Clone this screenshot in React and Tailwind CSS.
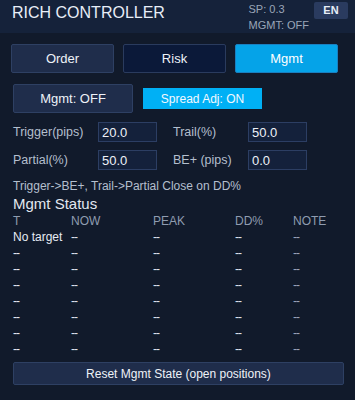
import React from 'react'

const rows = [
  ['No target', '--', '--', '--', '--'],
  ['--', '--', '--', '--', '--'],
  ['--', '--', '--', '--', '--'],
  ['--', '--', '--', '--', '--'],
  ['--', '--', '--', '--', '--'],
  ['--', '--', '--', '--', '--'],
  ['--', '--', '--', '--', '--'],
  ['--', '--', '--', '--', '--'],
]

const Field = ({ label, value, labelWidth, className = '' }) => (
  <div className={'flex items-center ' + className}>
    <span className={'text-[12.5px] text-[#b4bfce] ' + labelWidth}>{label}</span>
    <input
      defaultValue={value}
      className="h-[20px] w-[59px] border border-[#2c3e63] bg-[#14213b] px-[3px] text-[13px] text-[#eef2f8] outline-none"
    />
  </div>
)

export default function App() {
  return (
    <div className="h-[400px] w-[355px] overflow-hidden bg-[#111a2b] font-['Liberation_Sans',Arial,sans-serif]">
      <div className="flex h-[33px] items-start bg-[#15223a]">
        <h1 className="ml-3 pt-[3px] text-[16px] leading-[20px] text-[#e8eef7]">RICH CONTROLLER</h1>
        <div className="ml-auto pt-[1px] text-[11px] leading-[16px] text-[#9aa6b8]">
          <div>SP: 0.3</div>
          <div>MGMT: OFF</div>
        </div>
        <button className="ml-[5px] mr-[7px] mt-[2px] h-[17px] w-[34px] rounded-[2px] bg-[#2a3b5f] text-[11px] font-bold text-[#e8eef7]">
          EN
        </button>
      </div>

      <div className="mt-[11px] flex gap-[9px] px-[11px]">
        <button className="h-[29px] w-[103px] rounded-[2px] border border-[#2e4063] bg-[#1f2d4b] text-[13px] text-[#eef2f8]">
          Order
        </button>
        <button className="h-[29px] w-[103px] rounded-[2px] border border-[#2a3b5e] bg-[#0b1939] text-[13px] text-[#eef2f8]">
          Risk
        </button>
        <button className="h-[29px] w-[103px] rounded-[2px] border border-[#1a7fc0] bg-[#05a3e8] text-[13px] text-white">
          Mgmt
        </button>
      </div>

      <div className="mt-[11px] flex items-center gap-[10px] px-[13px]">
        <button className="h-[29px] w-[120px] rounded-[2px] border border-[#2e4063] bg-[#1f2d4b] text-[13px] text-[#eef2f8]">
          Mgmt: OFF
        </button>
        <button className="h-[21px] w-[119px] bg-[#00b0f5] text-[12px] text-[#f2f8ff]">Spread Adj: ON</button>
      </div>

      <div className="mt-[9px] px-[13px]">
        <div className="flex">
          <Field label="Trigger(pips)" value="20.0" labelWidth="w-[85px]" />
          <Field label="Trail(%)" value="50.0" labelWidth="w-[75px]" className="ml-[16px]" />
        </div>
        <div className="mt-[8px] flex">
          <Field label="Partial(%)" value="50.0" labelWidth="w-[85px]" />
          <Field label="BE+ (pips)" value="0.0" labelWidth="w-[75px]" className="ml-[16px]" />
        </div>
        <p className="mt-[8px] text-[12px] leading-[16px] text-[#b4bfce]">Trigger-&gt;BE+, Trail-&gt;Partial Close on DD%</p>
        <h2 className="mt-[1px] text-[15px] leading-[18px] text-[#e2e8f0]">Mgmt Status</h2>

        <div className="grid grid-cols-[58px_82px_82px_58px_1fr] text-[12px] leading-[16px]">
          {['T', 'NOW', 'PEAK', 'DD%', 'NOTE'].map((h) => (
            <div key={h} className="text-[#8f9cb0]">{h}</div>
          ))}
          {rows.map((r, i) =>
            r.map((c, j) => (
              <div
                key={i + '-' + j}
                className={
                  (c === '--' ? 'tracking-[-1px] ' : '') +
                  (j === 0 ? 'text-[#e6ebf3]' : j === 4 ? 'text-[#9aa6b8]' : 'text-[#dfe5ee]')
                }
              >
                {c}
              </div>
            ))
          )}
        </div>

        <button className="mt-[5px] h-[23px] w-[331px] rounded-[2px] border border-[#2e4063] bg-[#1f2d4b] text-[12px] text-[#eef2f8]">
          Reset Mgmt State (open positions)
        </button>
      </div>
    </div>
  )
}
